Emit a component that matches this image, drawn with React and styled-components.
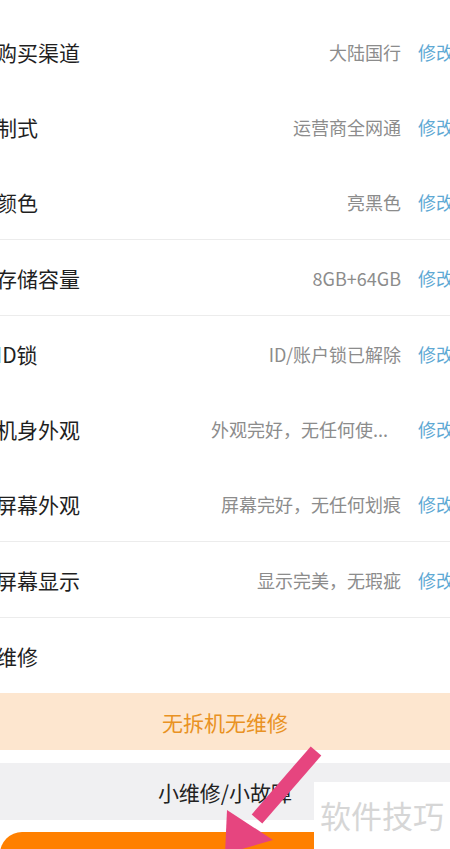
import React from "react";
import styled, { createGlobalStyle } from "styled-components";

const GlobalStyle = createGlobalStyle`
  html, body {
    margin: 0;
    padding: 0;
    background: #ffffff;
  }
  body {
    width: 450px;
    height: 849px;
    overflow: hidden;
    font-family: "Noto Sans CJK SC", "Noto Sans", sans-serif;
  }
`;

const Page = styled.div`
  position: relative;
  width: 450px;
  height: 849px;
  overflow: hidden;
  padding-top: 14px;
  box-sizing: border-box;
`;

const Row = styled.div`
  display: flex;
  align-items: center;
  height: 75px;
  width: 458px;
  margin-left: -4px;
`;

const Label = styled.div`
  flex: 1;
  font-size: 21px;
  color: #1f1f1f;
  white-space: nowrap;
`;

const Value = styled.div`
  font-size: 18px;
  color: #8c8c8c;
  white-space: nowrap;
  margin-right: ${(props) => (props.$cut ? "13px" : "0")};
`;

const Edit = styled.div`
  width: 36px;
  margin-left: 17px;
  font-size: 18px;
  color: #5ea9d4;
  white-space: nowrap;
`;

const Divider = styled.div`
  height: 1px;
  background: #ececec;
`;

const Option = styled.div`
  display: flex;
  align-items: center;
  justify-content: center;
  height: 57px;
  margin-bottom: ${(props) => props.$gap || "0"};
  background: ${(props) => (props.$active ? "#fde6cf" : "#f0f0f2")};
  color: ${(props) => (props.$active ? "#e99223" : "#222222")};
  font-size: 21px;
`;

const SubmitButton = styled.div`
  height: 40px;
  background: #ff8000;
  border-top-left-radius: 22px;
`;

const Watermark = styled.div`
  position: absolute;
  left: 314px;
  top: 782px;
  right: 0;
  bottom: 0;
  background: #ffffff;
  color: #d6d6d6;
  font-size: 31px;
  padding-left: 6px;
  padding-top: 10px;
  box-sizing: border-box;
  white-space: nowrap;
`;

const Arrow = styled.svg`
  position: absolute;
  left: 0;
  top: 0;
  pointer-events: none;
`;

const rows = [
  ["购买渠道", "大陆国行"],
  ["制式", "运营商全网通"],
  ["颜色", "亮黑色"],
  "divider",
  ["存储容量", "8GB+64GB"],
  "divider",
  ["ID锁", "ID/账户锁已解除"],
  ["机身外观", "外观完好，无任何使...", true],
  ["屏幕外观", "屏幕完好，无任何划痕"],
  "divider",
  ["屏幕显示", "显示完美，无瑕疵"],
  "divider",
];

export default function App() {
  return (
    <>
      <GlobalStyle />
      <Page>
        {rows.map((r, i) =>
          r === "divider" ? (
            <Divider key={i} />
          ) : (
            <Row key={i}>
              <Label>{r[0]}</Label>
              <Value $cut={r[2]}>{r[1]}</Value>
              <Edit>修改</Edit>
            </Row>
          )
        )}
        <Row>
          <Label>维修</Label>
        </Row>
        <Option $active $gap="13px">无拆机无维修</Option>
        <Option $gap="12px">小维修/小故障</Option>
        <SubmitButton />
        <Watermark>软件技巧</Watermark>
        <Arrow width="450" height="849" viewBox="0 0 450 849">
          <line x1="316" y1="751" x2="257" y2="819" stroke="#e6457f" strokeWidth="14" />
          <polygon points="227,810 273,840 225,854" fill="#e6457f" />
        </Arrow>
      </Page>
    </>
  );
}
